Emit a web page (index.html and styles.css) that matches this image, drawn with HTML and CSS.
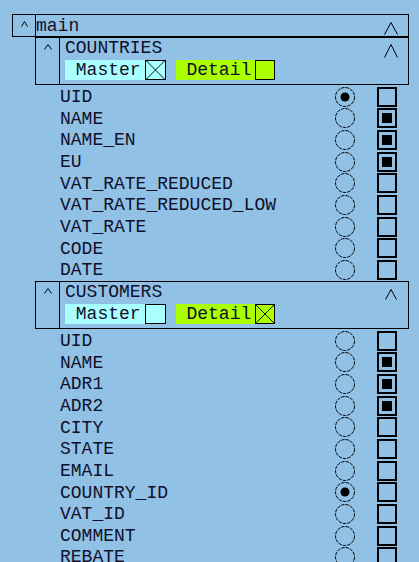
FILE: index.html
```html
<!DOCTYPE html>
<html>
<head>
<meta charset="utf-8">
<link rel="stylesheet" href="styles.css">
</head>
<body>
<div class="app">
  <div class="main-head">
    <div class="caret-cell caret-cell-main">
      <svg class="caret" width="7" height="6" viewBox="0 0 7 6"><polyline points="0.5,5.5 3.5,0.5 6.5,5.5" /></svg>
    </div>
    <div class="main-bar">
      <span class="main-name">main</span>
      <svg class="lambda" width="14" height="13" viewBox="0 0 14 13"><polyline points="0.5,12.5 7,0.5 13.5,12.5" /></svg>
    </div>
  </div>

  <div class="section">
    <div class="panel">
      <div class="caret-cell">
        <svg class="caret" width="8" height="6" viewBox="0 0 8 6"><polyline points="0.5,5.5 4,0.5 7.5,5.5" /></svg>
      </div>
      <div class="panel-body">
        <div class="panel-title">
          <span>COUNTRIES</span>
          <svg class="lambda" width="14" height="14" viewBox="0 0 14 14"><polyline points="0.5,13.5 7,0.5 13.5,13.5" /></svg>
        </div>
        <div class="chips">
          <div class="chip chip-master"><span class="chip-label"> Master</span><span class="xbox"><svg width="20" height="20" viewBox="0 0 20 20"><line x1="0" y1="0" x2="20" y2="20"/><line x1="20" y1="0" x2="0" y2="20"/></svg></span></div>
          <div class="chip chip-detail"><span class="chip-label"> Detail</span><span class="xbox"></span></div>
        </div>
      </div>
    </div>
    <div class="fields">
      <div class="field"><span class="fname">UID</span><svg class="radio" width="20" height="20" viewBox="0 0 20 20"><circle cx="10" cy="10" r="9.5" class="ring"/><circle cx="10" cy="10" r="4.5" class="dot"/></svg><span class="check"></span></div>
      <div class="field"><span class="fname">NAME</span><svg class="radio" width="20" height="20" viewBox="0 0 20 20"><circle cx="10" cy="10" r="9.5" class="ring"/></svg><span class="check on"></span></div>
      <div class="field"><span class="fname">NAME_EN</span><svg class="radio" width="20" height="20" viewBox="0 0 20 20"><circle cx="10" cy="10" r="9.5" class="ring"/></svg><span class="check on"></span></div>
      <div class="field"><span class="fname">EU</span><svg class="radio" width="20" height="20" viewBox="0 0 20 20"><circle cx="10" cy="10" r="9.5" class="ring"/></svg><span class="check on"></span></div>
      <div class="field"><span class="fname">VAT_RATE_REDUCED</span><svg class="radio" width="20" height="20" viewBox="0 0 20 20"><circle cx="10" cy="10" r="9.5" class="ring"/></svg><span class="check"></span></div>
      <div class="field"><span class="fname">VAT_RATE_REDUCED_LOW</span><svg class="radio" width="20" height="20" viewBox="0 0 20 20"><circle cx="10" cy="10" r="9.5" class="ring"/></svg><span class="check"></span></div>
      <div class="field"><span class="fname">VAT_RATE</span><svg class="radio" width="20" height="20" viewBox="0 0 20 20"><circle cx="10" cy="10" r="9.5" class="ring"/></svg><span class="check"></span></div>
      <div class="field"><span class="fname">CODE</span><svg class="radio" width="20" height="20" viewBox="0 0 20 20"><circle cx="10" cy="10" r="9.5" class="ring"/></svg><span class="check"></span></div>
      <div class="field"><span class="fname">DATE</span><svg class="radio" width="20" height="20" viewBox="0 0 20 20"><circle cx="10" cy="10" r="9.5" class="ring"/></svg><span class="check"></span></div>
    </div>

    <div class="panel panel-second">
      <div class="caret-cell">
        <svg class="caret" width="8" height="6" viewBox="0 0 8 6"><polyline points="0.5,5.5 4,0.5 7.5,5.5" /></svg>
      </div>
      <div class="panel-body">
        <div class="panel-title">
          <span>CUSTOMERS</span>
          <svg class="lambda lambda-small" width="12" height="11" viewBox="0 0 12 11"><polyline points="0.5,10.5 6,0.5 11.5,10.5" /></svg>
        </div>
        <div class="chips">
          <div class="chip chip-master"><span class="chip-label"> Master</span><span class="xbox"></span></div>
          <div class="chip chip-detail"><span class="chip-label"> Detail</span><span class="xbox"><svg width="20" height="20" viewBox="0 0 20 20"><line x1="0" y1="0" x2="20" y2="20"/><line x1="20" y1="0" x2="0" y2="20"/></svg></span></div>
        </div>
      </div>
    </div>
    <div class="fields">
      <div class="field"><span class="fname">UID</span><svg class="radio" width="20" height="20" viewBox="0 0 20 20"><circle cx="10" cy="10" r="9.5" class="ring"/></svg><span class="check"></span></div>
      <div class="field"><span class="fname">NAME</span><svg class="radio" width="20" height="20" viewBox="0 0 20 20"><circle cx="10" cy="10" r="9.5" class="ring"/></svg><span class="check on"></span></div>
      <div class="field"><span class="fname">ADR1</span><svg class="radio" width="20" height="20" viewBox="0 0 20 20"><circle cx="10" cy="10" r="9.5" class="ring"/></svg><span class="check on"></span></div>
      <div class="field"><span class="fname">ADR2</span><svg class="radio" width="20" height="20" viewBox="0 0 20 20"><circle cx="10" cy="10" r="9.5" class="ring"/></svg><span class="check on"></span></div>
      <div class="field"><span class="fname">CITY</span><svg class="radio" width="20" height="20" viewBox="0 0 20 20"><circle cx="10" cy="10" r="9.5" class="ring"/></svg><span class="check"></span></div>
      <div class="field"><span class="fname">STATE</span><svg class="radio" width="20" height="20" viewBox="0 0 20 20"><circle cx="10" cy="10" r="9.5" class="ring"/></svg><span class="check"></span></div>
      <div class="field"><span class="fname">EMAIL</span><svg class="radio" width="20" height="20" viewBox="0 0 20 20"><circle cx="10" cy="10" r="9.5" class="ring"/></svg><span class="check"></span></div>
      <div class="field"><span class="fname">COUNTRY_ID</span><svg class="radio" width="20" height="20" viewBox="0 0 20 20"><circle cx="10" cy="10" r="9.5" class="ring"/><circle cx="10" cy="10" r="4.5" class="dot"/></svg><span class="check"></span></div>
      <div class="field"><span class="fname">VAT_ID</span><svg class="radio" width="20" height="20" viewBox="0 0 20 20"><circle cx="10" cy="10" r="9.5" class="ring"/></svg><span class="check"></span></div>
      <div class="field"><span class="fname">COMMENT</span><svg class="radio" width="20" height="20" viewBox="0 0 20 20"><circle cx="10" cy="10" r="9.5" class="ring"/></svg><span class="check"></span></div>
      <div class="field"><span class="fname">REBATE</span><svg class="radio" width="20" height="20" viewBox="0 0 20 20"><circle cx="10" cy="10" r="9.5" class="ring"/></svg><span class="check"></span></div>
    </div>
  </div>
</div>
</body>
</html>
```

FILE: styles.css
```css
html, body {
  margin: 0;
  padding: 0;
  overflow: hidden;
  height: 100%;
}
body {
  background: #92c1e6;
  color: #10102a;
  font-family: "Liberation Mono", "Courier New", monospace;
  font-size: 18px;
}
.app {
  padding: 14px 0 0 12px;
  width: 397px;
}
.main-head {
  display: flex;
  height: 23px;
}
.caret-cell {
  box-sizing: border-box;
  border: 1px solid #000;
  display: flex;
  justify-content: center;
  align-items: flex-start;
}
.caret-cell-main {
  width: 24px;
  height: 23px;
  padding-top: 6px;
}
.caret polyline, .lambda polyline {
  fill: none;
  stroke: #000;
  stroke-width: 1;
}
.main-bar {
  flex: 1;
  box-sizing: border-box;
  height: 23px;
  border-top: 1px solid #000;
  border-right: 1px solid #000;
  border-bottom: 1px solid #000;
  display: flex;
  justify-content: space-between;
  align-items: flex-start;
  line-height: 21px;
  padding-right: 10px;
}
.main-name {
  display: block;
  padding-top: 1px;
}
.main-bar .lambda {
  margin-top: 7px;
}
.section {
  margin-left: 23px;
}
.panel {
  box-sizing: border-box;
  height: 48px;
  border: 1px solid #000;
  display: flex;
}
.panel-second {
  margin-top: 1px;
}
.panel .caret-cell {
  width: 24px;
  border-width: 0 1px 0 0;
  padding-top: 6px;
}
.panel-body {
  flex: 1;
  padding-left: 5px;
  padding-right: 10px;
}
.panel-title {
  display: flex;
  justify-content: space-between;
  align-items: flex-start;
  height: 20px;
  line-height: 21px;
}
.panel-title .lambda {
  margin-top: 6px;
}
.panel-title .lambda-small {
  margin-top: 7px;
  margin-right: 1px;
}
.chips {
  display: flex;
  gap: 10px;
  margin-top: 2px;
}
.chip {
  display: flex;
  align-items: center;
  height: 20px;
  line-height: 21px;
}
.chip-master {
  background: #aaffff;
}
.chip-detail {
  background: #aaff00;
}
.chip-label {
  white-space: pre;
  padding-top: 1px;
}
.xbox {
  box-sizing: border-box;
  width: 20px;
  height: 20px;
  margin-left: 4px;
  border: 1px solid #000;
  display: block;
  overflow: hidden;
}
.chip-master .xbox {
  width: 21px;
}
.xbox svg {
  display: block;
  width: 100%;
  height: 100%;
}
.xbox line {
  stroke: #000;
  stroke-width: 1;
}
.fields {
  margin-left: 25px;
}
.field {
  display: grid;
  grid-template-columns: 275px 20px 22px 20px;
  grid-template-areas: "name radio . check";
  align-items: center;
  height: 21.67px;
  line-height: 21.67px;
}
.fname {
  grid-area: name;
  white-space: pre;
  padding-top: 2px;
}
.radio {
  grid-area: radio;
  display: block;
}
.ring {
  fill: none;
  stroke: #000;
  stroke-width: 1;
  stroke-dasharray: 3.5 1;
}
.dot {
  fill: #000;
}
.check {
  grid-area: check;
  box-sizing: border-box;
  width: 20px;
  height: 20px;
  border: 2px solid #000;
  display: flex;
  align-items: center;
  justify-content: center;
}
.check.on::after {
  content: "";
  width: 10px;
  height: 10px;
  background: #000;
}
```
